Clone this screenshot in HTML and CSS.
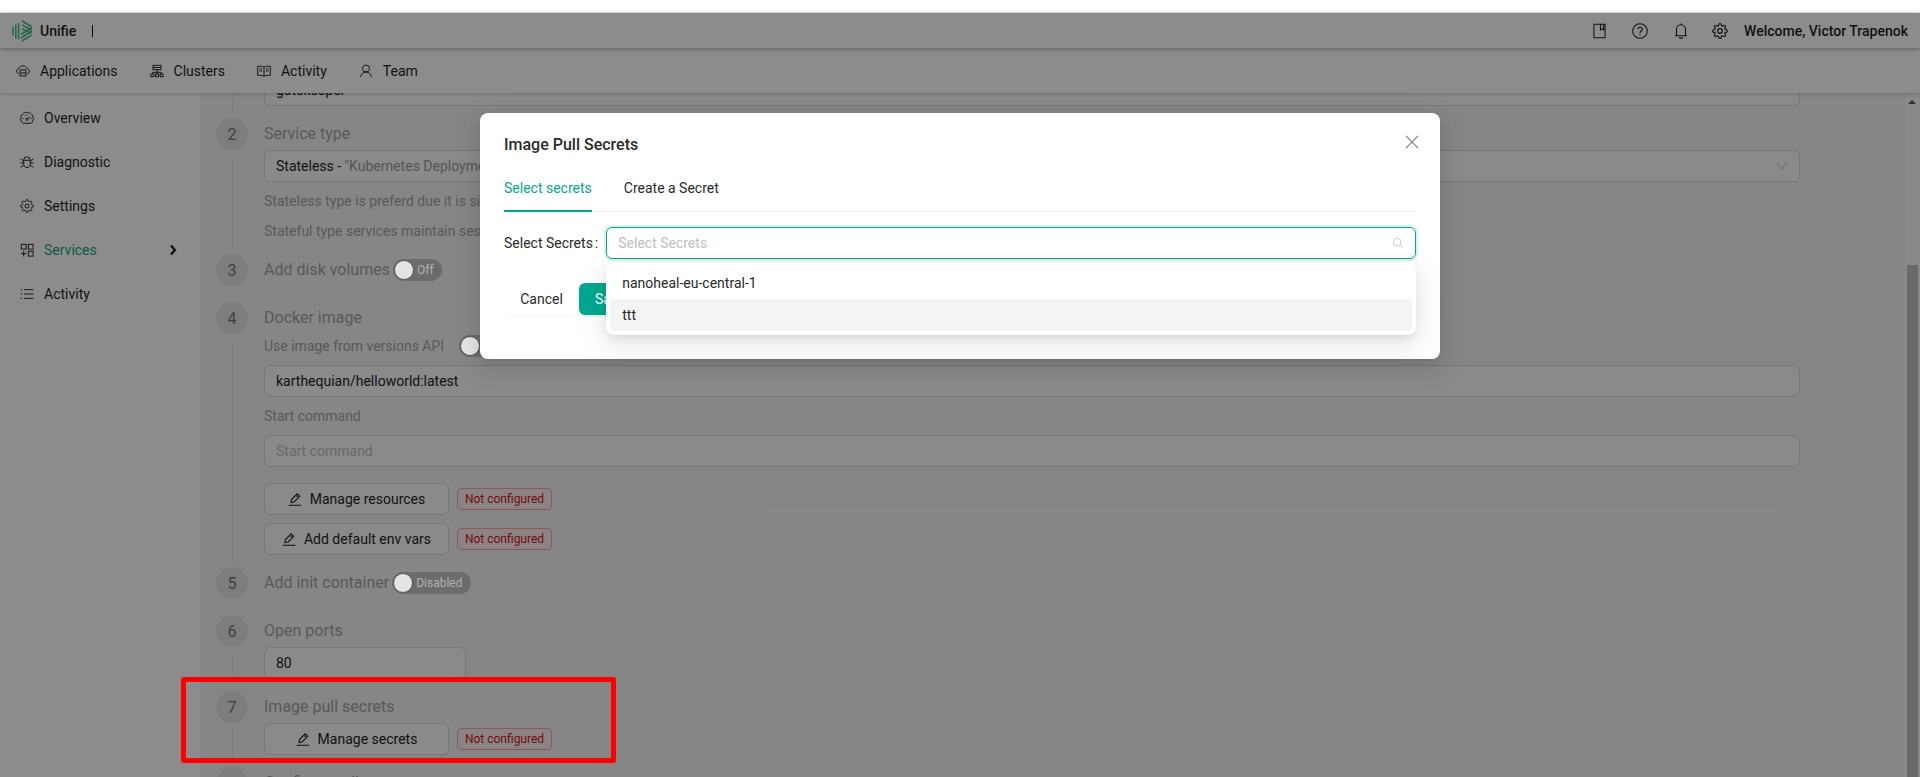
FILE: index.html
```html
<!DOCTYPE html>
<html lang="en">
<head>
    <meta charset="UTF-8">
    <title>Unifie</title>
    <link rel="stylesheet" href="styles.css">
</head>
<body>
    <svg class="icon-defs" aria-hidden="true">
        <symbol id="i-cloud" viewBox="0 0 16 16"><path d="M3.2 11.2C1.6 10.8.6 9.6.6 8.2c0-1.5 1.1-2.7 2.5-3C3.8 3.400 5.700 2.200 8 2.200s4.200 1.200 4.900 3c1.400.3 2.500 1.500 2.500 3 0 1.400-1 2.600-2.600 3"/><rect x="4.700" y="6.700" width="6.600" height="7"/><path d="M4.700 10.200h6.600"/></symbol>
        <symbol id="i-cluster" viewBox="0 0 16 16"><rect x="3.500" y="1.500" width="9" height="5"/><path d="M3.500 4h9M8 6.500v3M3 9.500h10M3 9.500v2M13 9.500v2M8 9.500v2"/><rect x="1" y="11.500" width="3.400" height="3"/><rect x="6.300" y="11.500" width="3.400" height="3"/><rect x="11.600" y="11.500" width="3.400" height="3"/></symbol>
        <symbol id="i-read" viewBox="0 0 16 16"><path d="M8 3.500C6.500 2.500 3 2.500.8 2.500v10.500c2.200 0 5.700 0 7.200 1 1.500-1 5-1 7.200-1V2.500C13 2.500 9.500 2.500 8 3.500zM8 3.500V14M2.800 5.700h3M2.800 8h3M10.200 5.700h3M10.200 8h3"/></symbol>
        <symbol id="i-user" viewBox="0 0 16 16"><circle cx="8" cy="5.200" r="4"/><path d="M1.800 15c.3-3.400 2.900-5.800 6.200-5.800s5.900 2.400 6.200 5.800"/></symbol>
        <symbol id="i-gauge" viewBox="0 0 16 16"><path d="M3.300 14C1.800 12.700.8 10.700.8 8.500.8 4.500 4 1.500 8 1.500s7.200 3 7.200 7c0 2.200-1 4.200-2.500 5.500zM8.500 9l3-3M2.800 8.500h1.400M11.800 8.500h1.400M8 3.500v1.400M4.500 5l1 1"/><circle cx="8" cy="9.500" r="1.200"/></symbol>
        <symbol id="i-bug" viewBox="0 0 16 16"><path d="M4.200 6.200c0-2.300 1.700-4 3.800-4s3.800 1.700 3.800 4v4.300c0 2.100-1.700 3.900-3.800 3.900s-3.800-1.800-3.800-3.900zM4.200 6h7.600M5 2.500l1 1M11 2.500l-1 1M.8 4.500l3.400 2.500M15.200 4.500l-3.400 2.500M.5 9h3.700M15.500 9h-3.700M.8 14l3.600-2.200M15.200 14l-3.600-2.200"/></symbol>
        <symbol id="i-gear" viewBox="0 0 24 24"><g stroke-width="1.700"><circle cx="12" cy="12" r="3.500"/><path d="M19.400 15a1.650 1.650 0 0 0 .33 1.820l.06.06a2 2 0 0 1 0 2.830 2 2 0 0 1-2.830 0l-.06-.06a1.650 1.650 0 0 0-1.820-.33 1.650 1.650 0 0 0-1 1.510V21a2 2 0 0 1-2 2 2 2 0 0 1-2-2v-.09A1.650 1.650 0 0 0 9 19.400a1.650 1.650 0 0 0-1.820.33l-.06.06a2 2 0 0 1-2.830 0 2 2 0 0 1 0-2.830l.06-.06a1.650 1.650 0 0 0 .33-1.820 1.650 1.650 0 0 0-1.510-1H3a2 2 0 0 1-2-2 2 2 0 0 1 2-2h.09A1.650 1.650 0 0 0 4.600 9a1.650 1.650 0 0 0-.33-1.820l-.06-.06a2 2 0 0 1 0-2.830 2 2 0 0 1 2.830 0l.06.06a1.650 1.650 0 0 0 1.820.33H9a1.650 1.650 0 0 0 1-1.510V3a2 2 0 0 1 2-2 2 2 0 0 1 2 2v.09a1.650 1.650 0 0 0 1 1.510 1.650 1.650 0 0 0 1.820-.33l.06-.06a2 2 0 0 1 2.830 0 2 2 0 0 1 0 2.830l-.06.06a1.650 1.650 0 0 0-.33 1.820V9a1.650 1.650 0 0 0 1.510 1H21a2 2 0 0 1 2 2 2 2 0 0 1-2 2h-.09a1.650 1.650 0 0 0-1.510 1z"/></g></symbol>
        <symbol id="i-apps" viewBox="0 0 16 16"><rect x="1.500" y="1.500" width="5.500" height="5.500"/><rect x="9.500" y="1.500" width="5.500" height="5.500"/><rect x="9.500" y="9.500" width="5.500" height="5.500"/><path d="M4.200 9v6.500M1 12.200h6.500"/></symbol>
        <symbol id="i-list" viewBox="0 0 16 16"><path d="M4.500 3h11M4.500 8h11M4.500 13h11M.8 3h1.500M.8 8h1.500M.8 13h1.500"/></symbol>
        <symbol id="i-book" viewBox="0 0 14 16"><path d="M1 .8h12v14.400H1zM8 .8v6l1.800-1.300 1.700 1.300v-6"/></symbol>
        <symbol id="i-help" viewBox="0 0 16 16"><circle cx="8" cy="8" r="7.300"/><path d="M5.700 6.300c0-1.300 1-2.100 2.300-2.100s2.300.8 2.300 2c0 1.900-2.300 1.800-2.300 3.700M8 11v1.200"/></symbol>
        <symbol id="i-bell" viewBox="0 0 14 16"><path d="M1 12.800h12M2.500 12.800V6.500C2.500 3.800 4.400 1.800 7 1.800s4.500 2 4.500 4.700v6.300M7 .6v1.200M5.500 14c0 .8.700 1.400 1.500 1.400s1.500-.6 1.500-1.400"/></symbol>
        <symbol id="i-edit" viewBox="0 0 14 14"><path d="M.8 13.300h12.400M3 10.500l.5-3L9.200 1.800l2.600 2.500-5.800 5.700zM7.800 3.200l2.600 2.500"/></symbol>
    </svg>

    <div class="top-strip"></div>

    <header class="topbar">
        <div class="brand">
            <svg class="logo" viewBox="0 0 20 22">
                <path d="M1 6.500v9M3.800 4.500v14M6.600 3v16.500"/>
                <path d="M10 1l9.500 5.500M10 4.800l9.500 5.200M10 8.800l9.500 4.500M20 7.500L9 14.500M20 11L9 18M19.500 15.200L10 21"/>
            </svg>
            <span class="brand-name">Unifie</span>
            <span class="brand-sep"></span>
        </div>
        <div class="topbar-right">
            <svg class="tb-icon tb-book"><use href="#i-book"/></svg>
            <svg class="tb-icon"><use href="#i-help"/></svg>
            <svg class="tb-icon tb-bell"><use href="#i-bell"/></svg>
            <svg class="tb-icon"><use href="#i-gear"/></svg>
            <span class="welcome">Welcome, Victor Trapenok</span>
        </div>
    </header>

    <nav class="mainnav">
        <a class="nav-item"><svg class="icon"><use href="#i-cloud"/></svg>Applications</a>
        <a class="nav-item"><svg class="icon"><use href="#i-cluster"/></svg>Clusters</a>
        <a class="nav-item"><svg class="icon"><use href="#i-read"/></svg>Activity</a>
        <a class="nav-item"><svg class="icon"><use href="#i-user"/></svg>Team</a>
    </nav>

    <div class="layout">
        <aside class="sidebar">
            <a class="side-item"><svg class="icon"><use href="#i-gauge"/></svg>Overview</a>
            <a class="side-item"><svg class="icon"><use href="#i-bug"/></svg>Diagnostic</a>
            <a class="side-item"><svg class="icon"><use href="#i-gear"/></svg>Settings</a>
            <a class="side-item active"><svg class="icon dark"><use href="#i-apps"/></svg>Services<svg class="side-arrow" viewBox="0 0 8 12"><path d="M2 1.500L6 6l-4 4.500"/></svg></a>
            <a class="side-item"><svg class="icon"><use href="#i-list"/></svg>Activity</a>
        </aside>

        <main class="content">
            <div class="steps">
                <section class="step">
                    <div class="rail"><span class="rail-line"></span></div>
                    <div class="step-body scrolled">
                        <div class="field">gatekeeper</div>
                    </div>
                </section>

                <section class="step">
                    <div class="rail"><span class="num">2</span><span class="rail-line"></span></div>
                    <div class="step-body flush">
                        <div class="step-title">Service type</div>
                        <div class="field select">
                            <span>Stateless - <span class="muted">"Kubernetes Deployment"</span></span>
                            <svg class="chevron" viewBox="0 0 12 8"><path d="M1 1l5 6 5-6"/></svg>
                        </div>
                        <div class="hints">
                            <div class="hint">Stateless type is preferd due it is simple to scale.</div>
                            <div class="hint">Stateful type services maintain session data.</div>
                        </div>
                    </div>
                </section>

                <section class="step">
                    <div class="rail"><span class="num">3</span></div>
                    <div class="step-body inline">
                        <div class="step-title">Add disk volumes</div>
                        <span class="switch"><i class="knob"></i>Off</span>
                    </div>
                </section>

                <section class="step">
                    <div class="rail"><span class="num">4</span><span class="rail-line"></span></div>
                    <div class="step-body">
                        <div class="step-title">Docker image</div>
                        <div class="sub-row">
                            <span class="hint">Use image from versions API</span>
                            <span class="switch"><i class="knob"></i>Off</span>
                        </div>
                        <div class="field image-field">karthequian/helloworld:latest</div>
                        <div class="hint sub-label">Start command</div>
                        <div class="field placeholder">Start command</div>
                        <div class="action-row first">
                            <button class="action-btn"><svg class="icon edit"><use href="#i-edit"/></svg>Manage resources</button>
                            <span class="tag">Not configured</span>
                        </div>
                        <div class="action-row">
                            <button class="action-btn"><svg class="icon edit"><use href="#i-edit"/></svg>Add default env vars</button>
                            <span class="tag">Not configured</span>
                        </div>
                    </div>
                </section>

                <section class="step">
                    <div class="rail"><span class="num">5</span></div>
                    <div class="step-body inline">
                        <div class="step-title">Add init container</div>
                        <span class="switch"><i class="knob"></i>Disabled</span>
                    </div>
                </section>

                <section class="step">
                    <div class="rail"><span class="num">6</span><span class="rail-line"></span></div>
                    <div class="step-body">
                        <div class="step-title">Open ports</div>
                        <div class="field port-field">80</div>
                    </div>
                </section>

                <section class="step">
                    <div class="rail"><span class="num">7</span><span class="rail-line"></span></div>
                    <div class="step-body">
                        <div class="step-title">Image pull secrets</div>
                        <div class="action-row">
                            <button class="action-btn"><svg class="icon edit"><use href="#i-edit"/></svg>Manage secrets</button>
                            <span class="tag">Not configured</span>
                        </div>
                    </div>
                </section>

                <section class="step">
                    <div class="rail"><span class="num">8</span></div>
                    <div class="step-body">
                        <div class="step-title">Configure rollout</div>
                    </div>
                </section>
            </div>
        </main>

        <div class="scrollbar">
            <span class="scroll-up"></span>
            <span class="scroll-thumb"></span>
        </div>
    </div>

    <div class="mask"></div>

    <div class="modal">
        <svg class="modal-close" viewBox="0 0 14 14"><path d="M1 1l12 12M13 1L1 13"/></svg>
        <h3 class="modal-title">Image Pull Secrets</h3>
        <div class="tabs">
            <span class="tab active">Select secrets</span>
            <span class="tab">Create a Secret</span>
        </div>
        <div class="form-row">
            <label class="form-label">Select Secrets<span class="colon">:</span></label>
            <div class="select-wrap">
                <div class="select-input">
                    <span class="select-ph">Select Secrets</span>
                    <svg class="search" viewBox="0 0 14 14"><circle cx="6" cy="6" r="4.500"/><path d="M9.500 9.500l3.500 3.500"/></svg>
                </div>
                <div class="dropdown">
                    <div class="option">nanoheal-eu-central-1</div>
                    <div class="option hovered">ttt</div>
                </div>
            </div>
        </div>
        <div class="modal-actions">
            <button class="btn-cancel">Cancel</button>
            <button class="btn-save">Save</button>
        </div>
    </div>

    <div class="highlight"></div>
</body>
</html>
```

FILE: styles.css
```css
* {
    box-sizing: border-box;
}

html, body {
    height: 100%;
    margin: 0;
    overflow: hidden;
}

body {
    display: flex;
    flex-direction: column;
    font-family: Roboto, "Liberation Sans", sans-serif;
    font-size: 14px;
    color: #1f1f1f;
    background: #fff;
}

.icon-defs {
    position: absolute;
    width: 0;
    height: 0;
}

.icon {
    width: 14px;
    height: 14px;
    flex: none;
    fill: none;
    stroke: #222;
    stroke-width: 1.1;
}

.top-strip {
    height: 13px;
    flex: none;
    border-bottom: 1px solid #e6e6e6;
}

/* top bar */
.topbar {
    height: 35px;
    flex: none;
    display: flex;
    align-items: center;
    justify-content: space-between;
    padding: 0 12px;
    position: relative;
    z-index: 3;
    background: #fff;
    box-shadow: 0 1px 4px rgba(0, 0, 0, 0.35);
}

.brand {
    display: flex;
    align-items: center;
}

.logo {
    width: 20px;
    height: 22px;
    fill: none;
    stroke: #46b87a;
    stroke-width: 1.5;
}

.brand-name {
    margin-left: 8px;
    font-weight: 500;
}

.brand-sep {
    width: 1px;
    height: 12px;
    margin-left: 16px;
    background: #111;
}

.topbar-right {
    display: flex;
    align-items: center;
}

.tb-icon {
    width: 16px;
    height: 16px;
    margin-right: 26px;
    fill: none;
    stroke: #222;
    stroke-width: 1.1;
}

.tb-book {
    width: 13px;
    margin-left: 0;
    margin-right: 26px;
}

.tb-bell {
    width: 14px;
    margin-right: 24px;
}

.welcome {
    margin-left: -10px;
    font-weight: 500;
}

/* main nav */
.mainnav {
    height: 45px;
    flex: none;
    display: flex;
    align-items: center;
    gap: 32px;
    padding-left: 16px;
    position: relative;
    z-index: 2;
    background: #fff;
    box-shadow: 0 1px 4px rgba(0, 0, 0, 0.2);
}

.nav-item {
    display: flex;
    align-items: center;
    gap: 10px;
}

.layout {
    flex: 1;
    min-height: 0;
    display: flex;
}

/* sidebar */
.sidebar {
    width: 200px;
    flex: none;
    padding-top: 3px;
    background: #fff;
    box-shadow: 1px 0 2px rgba(0, 0, 0, 0.06);
}

.side-item {
    height: 44px;
    display: flex;
    align-items: center;
    gap: 10px;
    padding: 0 20px;
}

.side-item.active {
    color: #14a58c;
}

.side-arrow {
    width: 8px;
    height: 12px;
    margin-left: auto;
    margin-right: 3px;
    fill: none;
    stroke: #111;
    stroke-width: 2;
}

/* form steps */
.content {
    flex: 1;
    min-width: 0;
    overflow: hidden;
    background: #f5f5f5;
}

.steps {
    margin-top: -19px;
    padding: 0 105px 0 16px;
}

.step {
    display: flex;
    gap: 16px;
    padding-bottom: 8px;
}

.rail {
    width: 32px;
    flex: none;
    display: flex;
    flex-direction: column;
    align-items: center;
    margin-bottom: -8px;
}

.num {
    width: 32px;
    height: 32px;
    flex: none;
    display: flex;
    align-items: center;
    justify-content: center;
    border-radius: 50%;
    font-size: 16px;
    color: #757575;
    background: #e4e4e4;
}

.rail-line {
    flex: 1;
    width: 1px;
    margin: 6px 0;
    background: #e6e6e6;
}

.step-body {
    flex: 1;
    min-width: 0;
    min-height: 40px;
    padding-bottom: 4px;
}

.step-body.scrolled {
    min-height: 0;
}

.step-body.flush {
    padding-bottom: 0;
}

.step-body.inline {
    display: flex;
    gap: 3px;
    padding-bottom: 0;
}

.step-title {
    font-size: 16px;
    line-height: 32px;
    color: #a2a2a2;
}

.field {
    height: 32px;
    display: flex;
    align-items: center;
    justify-content: space-between;
    padding: 0 11px;
    border: 1px solid #d9d9d9;
    border-radius: 6px;
    background: #fbfbfb;
}

.placeholder {
    color: #bfbfbf;
}

.muted {
    color: #9c9c9c;
}

.chevron {
    width: 12px;
    height: 8px;
    fill: none;
    stroke: #bbb;
}

.hints {
    margin-top: 4px;
}

.hint {
    line-height: 30px;
    color: #a2a2a2;
}

.sub-row {
    height: 24px;
    display: flex;
    align-items: center;
    gap: 15px;
}

.sub-row .hint {
    line-height: 24px;
}

.image-field {
    margin-top: 7px;
}

.sub-label {
    line-height: 38px;
}

.port-field {
    width: 202px;
}

/* switch stays bright over the mask, same as the source */
.switch {
    position: relative;
    z-index: 20;
    height: 22px;
    display: inline-flex;
    align-items: center;
    gap: 3px;
    align-self: center;
    padding: 0 8px 0 1px;
    border-radius: 11px;
    font-size: 12px;
    color: #b0b0b0;
    background: #6c6c6c;
}

.step-body.inline .switch {
    margin-top: -8px;
}

.knob {
    width: 20px;
    height: 20px;
    border-radius: 50%;
    background: #e4e4e4;
    border: 1px solid #555;
}

/* buttons and tags */
.action-row {
    display: flex;
    align-items: center;
    gap: 8px;
}

.action-row + .action-row {
    margin-top: 8px;
}

.action-row.first {
    margin-top: 16px;
}

.action-btn {
    width: 185px;
    height: 32px;
    display: flex;
    align-items: center;
    justify-content: center;
    gap: 8px;
    padding: 0;
    border: 1px solid #d9d9d9;
    border-radius: 6px;
    font: inherit;
    color: #1f1f1f;
    background: #fbfbfb;
}

.tag {
    height: 22px;
    width: 95px;
    display: flex;
    align-items: center;
    justify-content: center;
    border: 1px solid #ffa39e;
    border-radius: 4px;
    font-size: 12px;
    color: #cf1322;
    background: #fff1f0;
}

/* scrollbar */
.scrollbar {
    width: 15px;
    flex: none;
    display: flex;
    flex-direction: column;
    align-items: center;
    padding-right: 1px;
    background: #f9f9f9;
}

.scroll-up {
    margin-top: 7px;
    border-left: 4px solid transparent;
    border-right: 4px solid transparent;
    border-bottom: 4px solid #555;
}

.scroll-thumb {
    width: 11px;
    flex: 1;
    margin-top: 161px;
    background: #bfbfbf;
}

/* modal */
.mask {
    position: absolute;
    top: 13px;
    left: 0;
    right: 0;
    bottom: 0;
    z-index: 10;
    background: rgba(0, 0, 0, 0.45);
}

.modal {
    position: absolute;
    top: 113px;
    left: 480px;
    z-index: 30;
    width: 960px;
    height: 246px;
    padding: 21px 24px 20px;
    border-radius: 8px;
    background: #fff;
    box-shadow: 0 6px 16px rgba(0, 0, 0, 0.08), 0 3px 6px -4px rgba(0, 0, 0, 0.12), 0 9px 28px 8px rgba(0, 0, 0, 0.05);
}

.modal-close {
    position: absolute;
    top: 22px;
    right: 21px;
    width: 14px;
    height: 14px;
    fill: none;
    stroke: #8c8c8c;
    stroke-width: 1.2;
}

.modal-title {
    margin: 0;
    font-size: 16px;
    line-height: 22px;
    font-weight: 500;
    color: #2a2a2a;
}

.tabs {
    display: flex;
    gap: 32px;
    margin-top: 9px;
    border-bottom: 1px solid #f0f0f0;
}

.tab {
    padding: 12px 0;
    line-height: 22px;
    color: #2a2a2a;
}

.tab.active {
    color: #00a88f;
    box-shadow: inset 0 -2px 0 #00a88f;
    margin-bottom: -1px;
}

.form-row {
    display: flex;
    align-items: center;
    gap: 8px;
    margin-top: 15px;
}

.form-label {
    color: #2a2a2a;
}

.colon {
    margin-left: 2px;
}

.select-wrap {
    flex: 1;
    position: relative;
}

.select-input {
    height: 32px;
    display: flex;
    align-items: center;
    justify-content: space-between;
    padding: 0 11px;
    border: 1px solid #00a88f;
    border-radius: 6px;
    box-shadow: 0 0 0 2px rgba(0, 168, 143, 0.15);
}

.select-ph {
    color: #bfbfbf;
}

.search {
    width: 12px;
    height: 12px;
    fill: none;
    stroke: #c4c4c4;
}

.dropdown {
    position: absolute;
    top: 36px;
    left: 0;
    right: 0;
    padding: 4px;
    border-radius: 8px;
    background: #fff;
    box-shadow: 0 6px 16px rgba(0, 0, 0, 0.08), 0 3px 6px -4px rgba(0, 0, 0, 0.12), 0 9px 28px 8px rgba(0, 0, 0, 0.05);
}

.option {
    height: 32px;
    display: flex;
    align-items: center;
    padding: 0 12px;
    border-radius: 4px;
    color: #2a2a2a;
}

.option.hovered {
    background: #f4f4f4;
}

.modal-actions {
    display: flex;
    margin-top: 24px;
}

.btn-cancel,
.btn-save {
    height: 32px;
    padding: 0 16px;
    border: none;
    border-radius: 6px;
    font: inherit;
}

.btn-cancel {
    width: 75px;
    color: #2a2a2a;
    background: #fff;
    box-shadow: 0 2px 0 rgba(0, 0, 0, 0.02);
}

.btn-save {
    color: #fff;
    background: #00a88f;
    box-shadow: 0 2px 0 rgba(0, 168, 143, 0.1);
}

/* red annotation over the screenshot */
.highlight {
    position: absolute;
    top: 677px;
    left: 181px;
    z-index: 40;
    width: 435px;
    height: 86px;
    border: 5px solid #f00;
    border-radius: 3px;
}
```
